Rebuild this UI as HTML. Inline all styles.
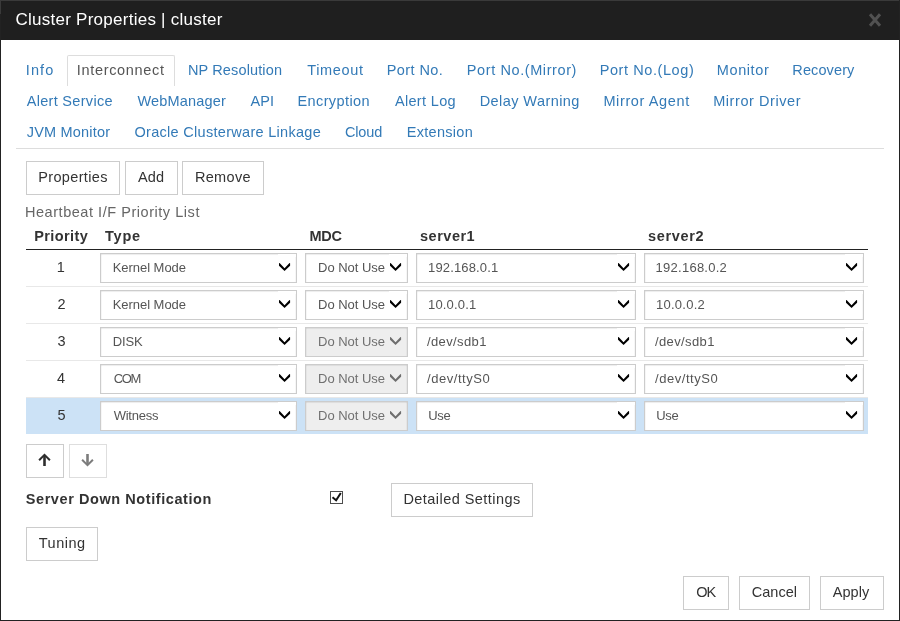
<!DOCTYPE html>
<html><head><meta charset="utf-8"><title>Cluster Properties | cluster</title>
<style>
html,body{margin:0;padding:0}
body{width:900px;height:621px;position:relative;overflow:hidden;background:#fff;font-family:"Liberation Sans",sans-serif;}
#root{position:absolute;left:0;top:0;width:900px;height:621px;will-change:transform}
.t{position:absolute;line-height:1;white-space:pre}
.hdr{position:absolute;left:0;top:0;width:900px;height:40px;background:#1f1f1f;border-top:1px solid #3a3a3a;box-sizing:border-box}
.bl{position:absolute;background:#222}
.navline{position:absolute;left:16px;top:148px;width:868px;height:1px;background:#ddd}
.tabact{position:absolute;left:67px;top:55px;width:108px;height:31px;box-sizing:border-box;border:1px solid #ddd;border-bottom:none;border-radius:2px 2px 0 0;background:#fff}
.btn{position:absolute;box-sizing:border-box;border:1px solid #ccc;background:#fff}
.btn.dis{border-color:#dedede}
.thline{position:absolute;left:26px;top:249px;width:842px;height:1px;background:#222}
.rsep{position:absolute;left:26px;width:842px;height:1px;background:#e8e8e8}
.dd{position:absolute;right:0;top:0;width:18px;height:3px;background:#fff}
.hl{position:absolute;left:26px;width:842px;height:36px;background:#cce2f6}
.sel{position:absolute;height:30px;box-sizing:border-box;border:1px solid #ccc;background:#fff;box-shadow:inset 0 1px 1px rgba(0,0,0,.075),inset 1px 0 1px rgba(0,0,0,.035),inset -1px 0 1px rgba(0,0,0,.035)}
.sel.dis{background:#eee}
.chev{position:absolute;top:8.9px}
.cb{position:absolute;left:330px;top:491px;width:13px;height:13px;box-sizing:border-box;border:1px solid #4d4d4d;background:#fff}
</style></head><body>
<div id="root">
<div class="hdr"></div>
<svg style="position:absolute;left:868px;top:12px" width="14" height="16" viewBox="0 0 14 16"><path d="M2 2.2 L12 13.8 M12 2.2 L2 13.8" stroke="#515151" stroke-width="3" fill="none"/></svg>
<div class="navline"></div>
<div class="tabact"></div>
<div class="btn" style="left:26px;top:161px;width:94px;height:34px"></div><div class="btn" style="left:125px;top:161px;width:53px;height:34px"></div><div class="btn" style="left:182px;top:161px;width:82px;height:34px"></div>
<div class="thline"></div>
<div class="sel" style="left:100px;top:253px;width:197px"><svg class="chev" style="left:177.9px" width="12" height="9" viewBox="0 0 12 9"><polygon points="0,0.3 0.6,0 5.55,5.2 10.5,0 11.1,0.3 11.1,2.8 5.55,8 0,2.8" fill="#000"/></svg><i class="dd"></i></div><div class="sel" style="left:305px;top:253px;width:103px"><svg class="chev" style="left:83.9px" width="12" height="9" viewBox="0 0 12 9"><polygon points="0,0.3 0.6,0 5.55,5.2 10.5,0 11.1,0.3 11.1,2.8 5.55,8 0,2.8" fill="#000"/></svg><i class="dd"></i></div><div class="sel" style="left:416px;top:253px;width:220px"><svg class="chev" style="left:200.9px" width="12" height="9" viewBox="0 0 12 9"><polygon points="0,0.3 0.6,0 5.55,5.2 10.5,0 11.1,0.3 11.1,2.8 5.55,8 0,2.8" fill="#000"/></svg><i class="dd"></i></div><div class="sel" style="left:644px;top:253px;width:220px"><svg class="chev" style="left:200.9px" width="12" height="9" viewBox="0 0 12 9"><polygon points="0,0.3 0.6,0 5.55,5.2 10.5,0 11.1,0.3 11.1,2.8 5.55,8 0,2.8" fill="#000"/></svg><i class="dd"></i></div><div class="rsep" style="top:286px"></div><div class="sel" style="left:100px;top:290px;width:197px"><svg class="chev" style="left:177.9px" width="12" height="9" viewBox="0 0 12 9"><polygon points="0,0.3 0.6,0 5.55,5.2 10.5,0 11.1,0.3 11.1,2.8 5.55,8 0,2.8" fill="#000"/></svg><i class="dd"></i></div><div class="sel" style="left:305px;top:290px;width:103px"><svg class="chev" style="left:83.9px" width="12" height="9" viewBox="0 0 12 9"><polygon points="0,0.3 0.6,0 5.55,5.2 10.5,0 11.1,0.3 11.1,2.8 5.55,8 0,2.8" fill="#000"/></svg><i class="dd"></i></div><div class="sel" style="left:416px;top:290px;width:220px"><svg class="chev" style="left:200.9px" width="12" height="9" viewBox="0 0 12 9"><polygon points="0,0.3 0.6,0 5.55,5.2 10.5,0 11.1,0.3 11.1,2.8 5.55,8 0,2.8" fill="#000"/></svg><i class="dd"></i></div><div class="sel" style="left:644px;top:290px;width:220px"><svg class="chev" style="left:200.9px" width="12" height="9" viewBox="0 0 12 9"><polygon points="0,0.3 0.6,0 5.55,5.2 10.5,0 11.1,0.3 11.1,2.8 5.55,8 0,2.8" fill="#000"/></svg><i class="dd"></i></div><div class="rsep" style="top:323px"></div><div class="sel" style="left:100px;top:327px;width:197px"><svg class="chev" style="left:177.9px" width="12" height="9" viewBox="0 0 12 9"><polygon points="0,0.3 0.6,0 5.55,5.2 10.5,0 11.1,0.3 11.1,2.8 5.55,8 0,2.8" fill="#000"/></svg><i class="dd"></i></div><div class="sel dis" style="left:305px;top:327px;width:103px"><svg class="chev" style="left:83.9px" width="12" height="9" viewBox="0 0 12 9"><polygon points="0,0.3 0.6,0 5.55,5.2 10.5,0 11.1,0.3 11.1,2.8 5.55,8 0,2.8" fill="#6e6e6e"/></svg></div><div class="sel" style="left:416px;top:327px;width:220px"><svg class="chev" style="left:200.9px" width="12" height="9" viewBox="0 0 12 9"><polygon points="0,0.3 0.6,0 5.55,5.2 10.5,0 11.1,0.3 11.1,2.8 5.55,8 0,2.8" fill="#000"/></svg><i class="dd"></i></div><div class="sel" style="left:644px;top:327px;width:220px"><svg class="chev" style="left:200.9px" width="12" height="9" viewBox="0 0 12 9"><polygon points="0,0.3 0.6,0 5.55,5.2 10.5,0 11.1,0.3 11.1,2.8 5.55,8 0,2.8" fill="#000"/></svg><i class="dd"></i></div><div class="rsep" style="top:360px"></div><div class="sel" style="left:100px;top:364px;width:197px"><svg class="chev" style="left:177.9px" width="12" height="9" viewBox="0 0 12 9"><polygon points="0,0.3 0.6,0 5.55,5.2 10.5,0 11.1,0.3 11.1,2.8 5.55,8 0,2.8" fill="#000"/></svg><i class="dd"></i></div><div class="sel dis" style="left:305px;top:364px;width:103px"><svg class="chev" style="left:83.9px" width="12" height="9" viewBox="0 0 12 9"><polygon points="0,0.3 0.6,0 5.55,5.2 10.5,0 11.1,0.3 11.1,2.8 5.55,8 0,2.8" fill="#6e6e6e"/></svg></div><div class="sel" style="left:416px;top:364px;width:220px"><svg class="chev" style="left:200.9px" width="12" height="9" viewBox="0 0 12 9"><polygon points="0,0.3 0.6,0 5.55,5.2 10.5,0 11.1,0.3 11.1,2.8 5.55,8 0,2.8" fill="#000"/></svg><i class="dd"></i></div><div class="sel" style="left:644px;top:364px;width:220px"><svg class="chev" style="left:200.9px" width="12" height="9" viewBox="0 0 12 9"><polygon points="0,0.3 0.6,0 5.55,5.2 10.5,0 11.1,0.3 11.1,2.8 5.55,8 0,2.8" fill="#000"/></svg><i class="dd"></i></div><div class="hl" style="top:398px"></div><div class="rsep" style="top:397px"></div><div class="sel" style="left:100px;top:401px;width:197px"><svg class="chev" style="left:177.9px" width="12" height="9" viewBox="0 0 12 9"><polygon points="0,0.3 0.6,0 5.55,5.2 10.5,0 11.1,0.3 11.1,2.8 5.55,8 0,2.8" fill="#000"/></svg><i class="dd"></i></div><div class="sel dis" style="left:305px;top:401px;width:103px"><svg class="chev" style="left:83.9px" width="12" height="9" viewBox="0 0 12 9"><polygon points="0,0.3 0.6,0 5.55,5.2 10.5,0 11.1,0.3 11.1,2.8 5.55,8 0,2.8" fill="#6e6e6e"/></svg></div><div class="sel" style="left:416px;top:401px;width:220px"><svg class="chev" style="left:200.9px" width="12" height="9" viewBox="0 0 12 9"><polygon points="0,0.3 0.6,0 5.55,5.2 10.5,0 11.1,0.3 11.1,2.8 5.55,8 0,2.8" fill="#000"/></svg><i class="dd"></i></div><div class="sel" style="left:644px;top:401px;width:220px"><svg class="chev" style="left:200.9px" width="12" height="9" viewBox="0 0 12 9"><polygon points="0,0.3 0.6,0 5.55,5.2 10.5,0 11.1,0.3 11.1,2.8 5.55,8 0,2.8" fill="#000"/></svg><i class="dd"></i></div>
<div class="btn" style="left:26px;top:444px;width:38px;height:34px"></div><div class="btn dis" style="left:69px;top:444px;width:38px;height:34px"></div>
<svg style="position:absolute;left:38.2px;top:453px" width="13" height="14" viewBox="0 0 13 14"><path d="M6.5 13 V2.5" stroke="#2e2e2e" stroke-width="2.6" fill="none"/><path d="M1.1 7.2 L6.5 1.8 L11.9 7.2" stroke="#2e2e2e" stroke-width="2" fill="none"/></svg>
<svg style="position:absolute;left:81.1px;top:452.5px" width="13" height="14" viewBox="0 0 13 14"><path d="M6.5 1 V11.5" stroke="#7c7c7c" stroke-width="2.6" fill="none"/><path d="M1.1 6.8 L6.5 12.2 L11.9 6.8" stroke="#7c7c7c" stroke-width="2" fill="none"/></svg>
<div class="cb"></div>
<svg style="position:absolute;left:331px;top:492px" width="11" height="11" viewBox="0 0 11 11"><path d="M1.5 5.3 L5.1 8.2 L9.8 1.0" stroke="#111" stroke-width="2" fill="none"/></svg>
<div class="btn" style="left:391px;top:483px;width:142px;height:34px"></div><div class="btn" style="left:26px;top:527px;width:72px;height:34px"></div>
<div class="btn" style="left:683px;top:576px;width:46px;height:34px"></div><div class="btn" style="left:739px;top:576px;width:71px;height:34px"></div><div class="btn" style="left:820px;top:576px;width:64px;height:34px"></div>
<span class="t" style="left:15.50px;top:11.30px;font-size:17px;color:#ffffff;letter-spacing:0.255px;">Cluster Properties | cluster</span>
<span class="t" style="left:25.70px;top:63.20px;font-size:14.5px;color:#337ab7;letter-spacing:1.160px;">Info</span>
<span class="t" style="left:76.80px;top:63.20px;font-size:14.5px;color:#555;letter-spacing:0.675px;">Interconnect</span>
<span class="t" style="left:187.90px;top:63.20px;font-size:14.5px;color:#337ab7;letter-spacing:0.140px;">NP Resolution</span>
<span class="t" style="left:307.30px;top:63.20px;font-size:14.5px;color:#337ab7;letter-spacing:0.631px;">Timeout</span>
<span class="t" style="left:386.80px;top:63.20px;font-size:14.5px;color:#337ab7;letter-spacing:0.406px;">Port No.</span>
<span class="t" style="left:466.80px;top:63.20px;font-size:14.5px;color:#337ab7;letter-spacing:0.596px;">Port No.(Mirror)</span>
<span class="t" style="left:599.70px;top:63.20px;font-size:14.5px;color:#337ab7;letter-spacing:0.583px;">Port No.(Log)</span>
<span class="t" style="left:716.80px;top:63.20px;font-size:14.5px;color:#337ab7;letter-spacing:0.596px;">Monitor</span>
<span class="t" style="left:792.30px;top:63.20px;font-size:14.5px;color:#337ab7;letter-spacing:0.115px;">Recovery</span>
<span class="t" style="left:26.70px;top:94.20px;font-size:14.5px;color:#337ab7;letter-spacing:0.306px;">Alert Service</span>
<span class="t" style="left:137.50px;top:94.20px;font-size:14.5px;color:#337ab7;letter-spacing:0.172px;">WebManager</span>
<span class="t" style="left:250.40px;top:94.20px;font-size:14.5px;color:#337ab7;letter-spacing:0.079px;">API</span>
<span class="t" style="left:297.40px;top:94.20px;font-size:14.5px;color:#337ab7;letter-spacing:0.417px;">Encryption</span>
<span class="t" style="left:394.90px;top:94.20px;font-size:14.5px;color:#337ab7;letter-spacing:0.341px;">Alert Log</span>
<span class="t" style="left:479.70px;top:94.20px;font-size:14.5px;color:#337ab7;letter-spacing:0.426px;">Delay Warning</span>
<span class="t" style="left:603.40px;top:94.20px;font-size:14.5px;color:#337ab7;letter-spacing:0.623px;">Mirror Agent</span>
<span class="t" style="left:713.20px;top:94.20px;font-size:14.5px;color:#337ab7;letter-spacing:0.565px;">Mirror Driver</span>
<span class="t" style="left:26.70px;top:125.20px;font-size:14.5px;color:#337ab7;letter-spacing:0.205px;">JVM Monitor</span>
<span class="t" style="left:134.50px;top:125.20px;font-size:14.5px;color:#337ab7;letter-spacing:0.294px;">Oracle Clusterware Linkage</span>
<span class="t" style="left:344.90px;top:125.20px;font-size:14.5px;color:#337ab7;letter-spacing:-0.130px;">Cloud</span>
<span class="t" style="left:406.80px;top:125.20px;font-size:14.5px;color:#337ab7;letter-spacing:0.286px;">Extension</span>
<span class="t" style="left:38.20px;top:169.70px;font-size:14.5px;color:#333;letter-spacing:0.352px;">Properties</span>
<span class="t" style="left:138.10px;top:169.70px;font-size:14.5px;color:#333;letter-spacing:0.032px;">Add</span>
<span class="t" style="left:194.90px;top:169.70px;font-size:14.5px;color:#333;letter-spacing:0.334px;">Remove</span>
<span class="t" style="left:25.00px;top:204.70px;font-size:14.5px;color:#666;letter-spacing:0.541px;">Heartbeat I/F Priority List</span>
<span class="t" style="left:34.20px;top:228.80px;font-size:14.5px;color:#333;font-weight:700;letter-spacing:0.414px;">Priority</span>
<span class="t" style="left:105.00px;top:228.80px;font-size:14.5px;color:#333;font-weight:700;letter-spacing:0.766px;">Type</span>
<span class="t" style="left:309.50px;top:228.80px;font-size:14.5px;color:#333;font-weight:700;letter-spacing:-0.275px;">MDC</span>
<span class="t" style="left:420.00px;top:228.80px;font-size:14.5px;color:#333;font-weight:700;letter-spacing:0.510px;">server1</span>
<span class="t" style="left:648.00px;top:228.80px;font-size:14.5px;color:#333;font-weight:700;letter-spacing:0.676px;">server2</span>
<span class="t" style="left:56.80px;top:260.00px;font-size:14.5px;color:#333;">1</span>
<span class="t" style="left:112.70px;top:260.70px;font-size:13px;color:#555;letter-spacing:-0.038px;">Kernel Mode</span>
<span class="t" style="left:318.10px;top:260.70px;font-size:13px;color:#555;letter-spacing:-0.029px;">Do Not Use</span>
<span class="t" style="left:428.00px;top:260.70px;font-size:13px;color:#555;letter-spacing:0.155px;">192.168.0.1</span>
<span class="t" style="left:655.60px;top:260.70px;font-size:13px;color:#555;letter-spacing:0.255px;">192.168.0.2</span>
<span class="t" style="left:57.50px;top:297.00px;font-size:14.5px;color:#333;">2</span>
<span class="t" style="left:112.70px;top:297.70px;font-size:13px;color:#555;letter-spacing:-0.038px;">Kernel Mode</span>
<span class="t" style="left:318.10px;top:297.70px;font-size:13px;color:#555;letter-spacing:-0.029px;">Do Not Use</span>
<span class="t" style="left:428.00px;top:297.70px;font-size:13px;color:#555;letter-spacing:0.178px;">10.0.0.1</span>
<span class="t" style="left:656.00px;top:297.70px;font-size:13px;color:#555;letter-spacing:0.249px;">10.0.0.2</span>
<span class="t" style="left:57.50px;top:334.00px;font-size:14.5px;color:#333;">3</span>
<span class="t" style="left:112.70px;top:334.70px;font-size:13px;color:#555;letter-spacing:-0.124px;">DISK</span>
<span class="t" style="left:318.10px;top:334.70px;font-size:13px;color:#707070;letter-spacing:-0.029px;">Do Not Use</span>
<span class="t" style="left:427.00px;top:334.70px;font-size:13px;color:#555;letter-spacing:0.382px;">/dev/sdb1</span>
<span class="t" style="left:655.00px;top:334.70px;font-size:13px;color:#555;letter-spacing:0.382px;">/dev/sdb1</span>
<span class="t" style="left:57.00px;top:371.00px;font-size:14.5px;color:#333;">4</span>
<span class="t" style="left:113.70px;top:371.70px;font-size:13px;color:#555;letter-spacing:-1.350px;">COM</span>
<span class="t" style="left:318.10px;top:371.70px;font-size:13px;color:#707070;letter-spacing:-0.029px;">Do Not Use</span>
<span class="t" style="left:427.00px;top:371.70px;font-size:13px;color:#555;letter-spacing:0.547px;">/dev/ttyS0</span>
<span class="t" style="left:655.00px;top:371.70px;font-size:13px;color:#555;letter-spacing:0.547px;">/dev/ttyS0</span>
<span class="t" style="left:57.50px;top:408.00px;font-size:14.5px;color:#333;">5</span>
<span class="t" style="left:113.70px;top:408.70px;font-size:13px;color:#555;letter-spacing:-0.238px;">Witness</span>
<span class="t" style="left:318.10px;top:408.70px;font-size:13px;color:#707070;letter-spacing:-0.029px;">Do Not Use</span>
<span class="t" style="left:428.20px;top:408.70px;font-size:13px;color:#555;letter-spacing:-0.294px;">Use</span>
<span class="t" style="left:656.20px;top:408.70px;font-size:13px;color:#555;letter-spacing:-0.294px;">Use</span>
<span class="t" style="left:25.75px;top:492.00px;font-size:14.5px;color:#333;font-weight:700;letter-spacing:0.574px;">Server Down Notification</span>
<span class="t" style="left:403.40px;top:491.70px;font-size:14.5px;color:#333;letter-spacing:0.452px;">Detailed Settings</span>
<span class="t" style="left:38.75px;top:536.00px;font-size:14.5px;color:#333;letter-spacing:0.503px;">Tuning</span>
<span class="t" style="left:696.30px;top:584.70px;font-size:14.5px;color:#333;letter-spacing:-1.079px;">OK</span>
<span class="t" style="left:751.80px;top:584.70px;font-size:14.5px;color:#333;letter-spacing:0.017px;">Cancel</span>
<span class="t" style="left:832.80px;top:584.70px;font-size:14.5px;color:#333;letter-spacing:0.045px;">Apply</span>
<div class="bl" style="left:0;top:14px;width:1px;height:607px"></div>
<div class="bl" style="left:0;top:0;width:1px;height:14px;background:#3a3a3a"></div>
<div class="bl" style="left:899px;top:0;width:1px;height:621px"></div>
<div class="bl" style="left:0;top:620px;width:900px;height:1px"></div>
</div>
</body></html>
